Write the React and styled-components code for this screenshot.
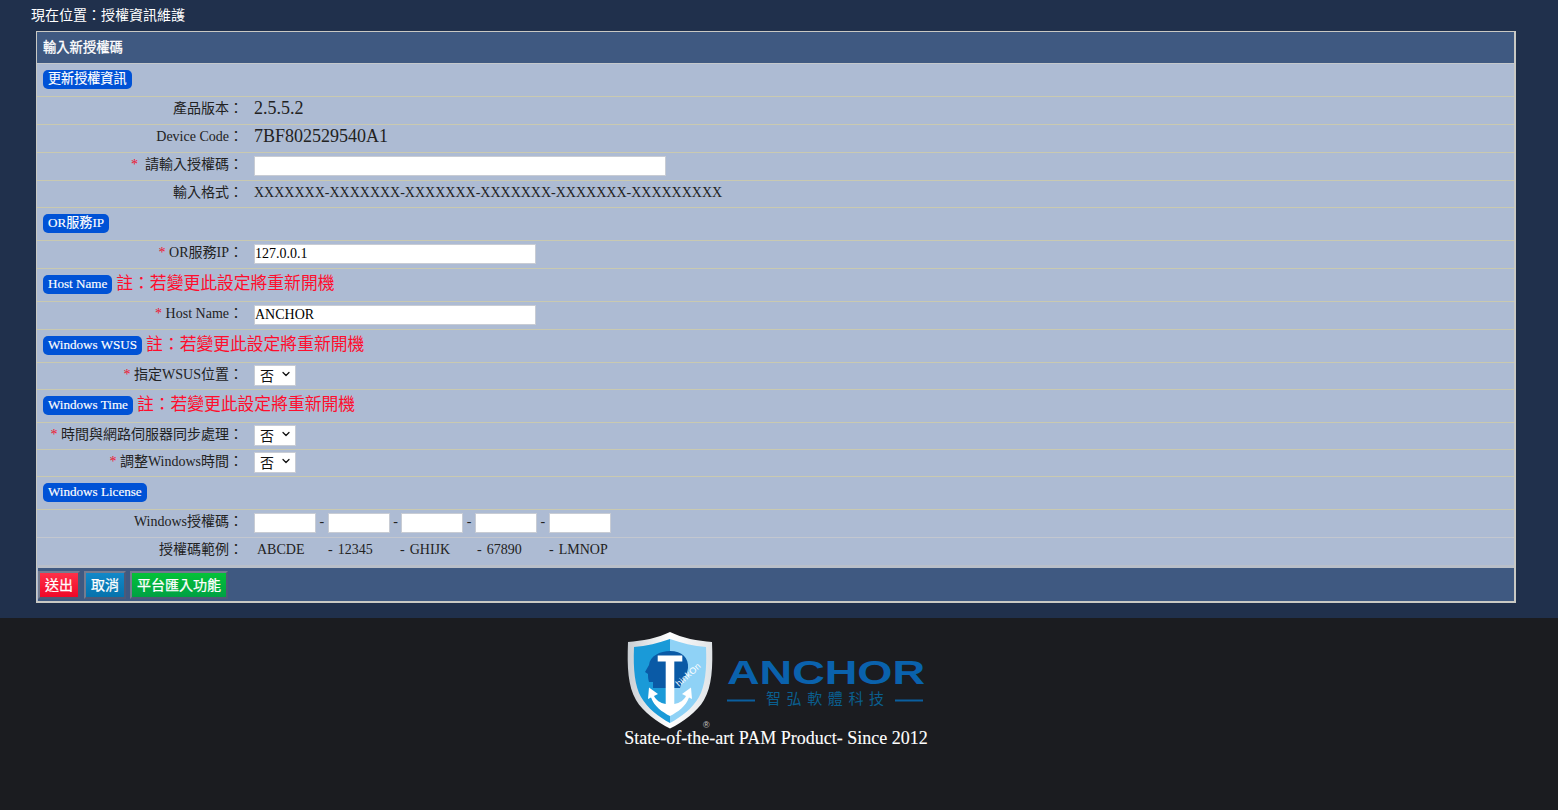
import styled, { createGlobalStyle } from "styled-components"
import { ChevronDown } from "lucide-react"

const NOTE = "註：若變更此設定將重新開機"

export default function App() {
    return (
        <>
            <GlobalStyle />
            <Main>
                <Breadcrumb>現在位置：授權資訊維護</Breadcrumb>
                <Panel>
                    <PanelTitle>輸入新授權碼</PanelTitle>

                    <SectionRow><Badge>更新授權資訊</Badge></SectionRow>
                    <Row>
                        <Label>產品版本：</Label>
                        <BigValue>2.5.5.2</BigValue>
                    </Row>
                    <Row>
                        <Label>Device Code：</Label>
                        <BigValue>7BF802529540A1</BigValue>
                    </Row>
                    <Row>
                        <Label><Star>*</Star>&nbsp;&nbsp;請輸入授權碼：</Label>
                        <TextInput $width={412} />
                    </Row>
                    <Row $height={27}>
                        <Label>輸入格式：</Label>
                        <span>XXXXXXX-XXXXXXX-XXXXXXX-XXXXXXX-XXXXXXX-XXXXXXXXX</span>
                    </Row>

                    <SectionRow><Badge>OR服務IP</Badge></SectionRow>
                    <Row>
                        <Label><Star>*</Star> OR服務IP：</Label>
                        <TextInput $width={282} defaultValue="127.0.0.1" />
                    </Row>

                    <SectionRow><Badge>Host Name</Badge><Note>{NOTE}</Note></SectionRow>
                    <Row>
                        <Label><Star>*</Star> Host Name：</Label>
                        <TextInput $width={282} defaultValue="ANCHOR" />
                    </Row>

                    <SectionRow><Badge>Windows WSUS</Badge><Note>{NOTE}</Note></SectionRow>
                    <Row $height={27}>
                        <Label><Star>*</Star> 指定WSUS位置：</Label>
                        <NoSelect />
                    </Row>

                    <SectionRow><Badge>Windows Time</Badge><Note>{NOTE}</Note></SectionRow>
                    <Row $height={27}>
                        <Label><Star>*</Star> 時間與網路伺服器同步處理：</Label>
                        <NoSelect />
                    </Row>
                    <Row $height={27}>
                        <Label><Star>*</Star> 調整Windows時間：</Label>
                        <NoSelect />
                    </Row>

                    <SectionRow><Badge>Windows License</Badge></SectionRow>
                    <Row $line="#c3c7cf">
                        <Label>Windows授權碼：</Label>
                        <KeyFields>
                            <TextInput $width={62} />-
                            <TextInput $width={62} />-
                            <TextInput $width={62} />-
                            <TextInput $width={62} />-
                            <TextInput $width={62} />
                        </KeyFields>
                    </Row>
                    <Row $height={27} $line="#adbbd3">
                        <Label>授權碼範例：</Label>
                        <Sample>
                            <span>ABCDE</span>
                            <span>-&nbsp;12345</span>
                            <span>-&nbsp;GHIJK</span>
                            <span>-&nbsp;67890</span>
                            <span>-&nbsp;LMNOP</span>
                        </Sample>
                    </Row>

                    <ActionBar>
                        <ActionButton $from="#ff3048" $to="#f00828">送出</ActionButton>
                        <ActionButton $from="#1288c8" $to="#0672ac">取消</ActionButton>
                        <ActionButton $from="#04c238" $to="#00a044">平台匯入功能</ActionButton>
                    </ActionBar>
                </Panel>
            </Main>

            <Footer>
                <AnchorLogo />
                <Slogan>State-of-the-art PAM Product- Since 2012</Slogan>
            </Footer>
        </>
    )
}

function NoSelect() {
    return (
        <SelectBox>
            <Select defaultValue="no">
                <option value="no">否</option>
                <option value="yes">是</option>
            </Select>
            <SelectArrow size={12} strokeWidth={2.5} />
        </SelectBox>
    )
}

function AnchorLogo() {
    return (
        <LogoSvg width="318" height="102" viewBox="0 0 318 102">
            <defs>
                <linearGradient id="rim" x1="0" y1="0" x2="1" y2="0">
                    <stop offset="0" stopColor="#c9ced3" />
                    <stop offset="0.5" stopColor="#ffffff" />
                    <stop offset="1" stopColor="#dfe3e6" />
                </linearGradient>
            </defs>

            {/* shield */}
            <path d="M50 4 C38 10 22 13 8 14 C7 40 8 58 16 72 C23 84 37 94 50 100.500 C63 94 77 84 84 72 C92 58 93 40 92 14 C78 13 62 10 50 4Z" fill="url(#rim)" />
            <path d="M50 11 C39 15 26 18 14 19 C13 42 15 58 21 69 C28 81 39 89 50 95Z" fill="#1a9ad8" />
            <path d="M50 11 C61 15 74 18 86 19 C87 42 85 58 79 69 C72 81 61 89 50 95Z" fill="#8fd2f6" />

            {/* head */}
            <path d="M33 60 L33 54 L29 54 C28 51 28 48 28 46 L25 44 L29 37 C30 28 40 23 50 23 C62 23 69 30 68 40 C67 48 62 51 60 60Z" fill="#0a5aa6" />

            {/* anchor */}
            <path d="M37.700 27.500 H62.300 V33.500 H54.300 V76 C60 75 64 72 66 68 L62 66 L71 59.500 L72 71 L69 69.500 C66 78 58 84 50 88 C42 84 34 78 31 69.500 L28 71 L29 59.500 L38 66 L34 68 C36 72 40 75 45.700 76 V33.500 H37.700Z" fill="#fff" />
            <LogoSmall x="0" y="0" textLength="30" transform="translate(59 59) rotate(-42)">hinkOn</LogoSmall>
            <text x="83" y="100" fontSize="9" fill="#c8c8c8" fontFamily="Liberation Sans, sans-serif">®</text>

            {/* wordmark */}
            <LogoWord x="107" y="56" textLength="198" lengthAdjust="spacingAndGlyphs">ANCHOR</LogoWord>
            <LogoRule x="107" y="71.500" width="28" height="2" />
            <LogoCjk x="146" y="76" textLength="118">智弘軟體科技</LogoCjk>
            <LogoRule x="275" y="71.500" width="28" height="2" />
        </LogoSvg>
    )
}

const GlobalStyle = createGlobalStyle`
    html, body {
        margin: 0;
        height: 100%;
        background: #1b1c20;
    }
    body {
        font-family: "Liberation Serif", "Noto Sans CJK TC", serif;
        font-size: 14px;
        color: #222;
    }
    * {
        box-sizing: border-box;
    }
`

const Main = styled.main`
height: 618px;
background-color: #20304c;
padding-left: 36px;
`

const Breadcrumb = styled.div`
height: 31px;
padding-top: 7px;
margin-left: -5px;
line-height: 17px;
color: #ffffff;
`

const Panel = styled.section`
width: 1480px;
background-color: #adbbd3;
border: 1px solid #c9c9c4;
border-width: 1px 2px 2px 1px;
`

const PanelTitle = styled.h2`
margin: 0;
height: 32px;
padding-left: 6px;
background-color: #3f5981;
border-bottom: 1px solid #c4c8cc;
color: #ffffff;
font-size: 13.300px;
font-weight: 400;
-webkit-text-stroke: 0.3px #ffffff;
line-height: 31px;
`

const SectionRow = styled.div`
height: 33px;
padding: 0 0 2px 6px;
display: flex;
align-items: center;
gap: 4px;
border-bottom: 1px solid #c9c9b0;
`

const Badge = styled.span`
height: 19px;
padding: 0 5px;
background-color: #0052d6;
border-radius: 5px;
color: #ffffff;
font-size: 13.100px;
-webkit-text-stroke: 0.15px #ffffff;
line-height: 18px;
white-space: nowrap;
`

const Note = styled.span`
color: #ff0d2d;
font-size: 16.800px;
line-height: 20px;
`

const Row = styled.div`
height: ${props => props.$height || 28}px;
padding-bottom: ${props => props.$height ? 2 : 3}px;
display: grid;
grid-template-columns: 206px 1fr;
column-gap: 11px;
align-items: center;
border-bottom: 1px solid ${props => props.$line || "#c9c9b0"};
line-height: 18px;
`

const Label = styled.label`
text-align: right;
white-space: nowrap;
`

const Star = styled.span`
color: #f0102c;
`

const BigValue = styled.span`
margin-bottom: 2px;
font-size: 18px;
`

const TextInput = styled.input`
width: ${props => props.$width}px;
height: 20px;
margin-top: 1px;
padding: 0;
border: 1px solid #c8ccd4;
background: #ffffff;
color: #000000;
font: 14px "Liberation Serif", "Noto Sans CJK TC", serif;
outline: none;
`

const KeyFields = styled.div`
display: flex;
align-items: center;
gap: 3.500px;
`

const Sample = styled.div`
display: grid;
grid-template-columns: 74px 72px 77px 72px auto;
justify-content: start;
word-spacing: 1.500px;

    span:first-child{
        padding-left: 3px;
    }
`

const SelectBox = styled.div`
position: relative;
width: 42px;
height: 21px;
`

const Select = styled.select`
appearance: none;
width: 100%;
height: 100%;
padding: 3px 0 0 5px;
border: 1px solid #c8ccd4;
border-radius: 0;
background: #ffffff;
color: #111;
font: 14px "Liberation Serif", "Noto Sans CJK TC", serif;
outline: none;
`

const SelectArrow = styled(ChevronDown)`
position: absolute;
top: 3px;
right: 4px;
color: #111;
pointer-events: none;
`

const ActionBar = styled.div`
height: 36px;
margin-left: 1px;
padding-top: 3px;
display: flex;
align-items: flex-start;
gap: 4px;
background-color: #3f5981;
border-top: 3px solid #b9bfc9;
`

const ActionButton = styled.button`
height: 28px;
padding: 1px 5px 0;
border: 2px solid;
border-color: #757c90 #4d5a78 #4d5a78 #757c90;
background: linear-gradient(${props => props.$from}, ${props => props.$to});
color: #ffffff;
font-family: "Liberation Serif", "Noto Sans CJK TC", serif;
font-size: 14px;
-webkit-text-stroke: 0.25px #ffffff;
line-height: 22px;
cursor: pointer;
`

const Footer = styled.footer`
height: 192px;
padding-top: 10px;
display: flex;
flex-direction: column;
align-items: center;
background-color: #1b1c20;
`

const LogoSvg = styled.svg`
display: block;
`

const LogoWord = styled.text`
font-family: "Liberation Sans", sans-serif;
font-size: 33px;
font-weight: 700;
fill: #0a62ad;
`

const LogoRule = styled.rect`
fill: #0a5f9f;
`

const LogoCjk = styled.text`
font-family: "Noto Sans CJK TC", sans-serif;
font-size: 15px;
fill: #0a5f8f;
`

const LogoSmall = styled.text`
font-family: "Liberation Sans", sans-serif;
font-size: 9px;
fill: #ffffff;
`

const Slogan = styled.div`
margin: -2px 6px 0 0;
color: #ffffff;
font-size: 18px;
-webkit-text-stroke: 0.1px #ffffff;
line-height: 20px;
`
